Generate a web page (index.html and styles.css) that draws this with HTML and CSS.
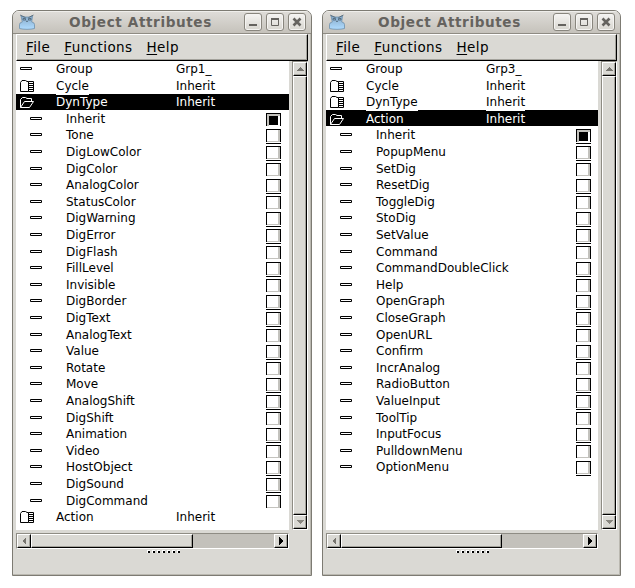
FILE: index.html
```
<!DOCTYPE html>
<html lang="en">
<head>
<meta charset="utf-8">
<title>Object Attributes</title>
<link rel="stylesheet" href="styles.css">
</head>
<body>
<svg class="defs" width="0" height="0">
  <defs>
    <linearGradient id="coat" x1="0" y1="0" x2="0" y2="1"><stop offset="0" stop-color="#86a9c8"/><stop offset="1" stop-color="#b0dcff"/></linearGradient>
    <symbol id="leaf" viewBox="0 0 16 14"><path d="M.5 5.500h11v2H.5z" fill="#fff" stroke="#000"/></symbol>
    <symbol id="closed" viewBox="0 0 16 14"><path d="M8.500 12.500h-8v-9l1.500-2h3.500l1.500 1h1.500" fill="none" stroke="#000"/><path d="M8.500 2.500h5v10h-5zM9 4.500h4M9 6.500h4M9 8.500h4M9 10.500h4" fill="none" stroke="#000"/></symbol>
    <symbol id="open" viewBox="0 0 16 14"><path d="M.5 12.500v-8l2-2h3l1.500 1h4.500v3M.5 12.500h9l4-6h-9l-4 6" fill="none" stroke="#fff"/></symbol>
    <symbol id="owl" viewBox="0 0 16 16"><path d="M.5 14.500v-4q0-2 2.800-2.500L2 1.800l3 1.200h5.500l3-1.200L12.700 8q2.800.5 2.800 2.500v4q-3 .8-7.500.8t-7.500-.8z" fill="url(#coat)" stroke="#6d90ad" stroke-width=".8"/><path d="M1 1l5.500 2.500M14.500 1L9.500 3.500M4 4.500h2.500v1.500H4zM9.500 4.500H12v1.500H9.500zM7 6.500l1 1.500 1-1.500" fill="none" stroke="#4d6272" stroke-width=".8"/></symbol>
  </defs>
</svg>
<main class="desktop" id="desktop"></main>
<script src="script.js"></script>
</body>
</html>
```
FILE: styles.css
```
body { margin: 0; background: #fff; font-family: "DejaVu Sans", sans-serif; color: #000; }
.defs { position: absolute; }
.desktop { display: flex; gap: 10px; padding: 10px 0 0 12px; }
.window { box-sizing: border-box; width: 300px; height: 566px; border: 1px solid #7d7b73; border-radius: 7px 7px 0 0; background: #dad9d4; box-shadow: inset -1px -1px #bab8b0; overflow: hidden; }
.window.narrow { width: 299px; }
.titlebar { display: flex; box-sizing: border-box; height: 23px; border-bottom: 1px solid #8e8b83; background: linear-gradient(#dfddd9, #c5c2bb); box-shadow: inset 0 1px #efeeeb; padding: 2px 5px 0 6px; }
.titlebar .owl { width: 16px; height: 16px; margin-top: 1px; }
.caption { flex: 1; padding-left: 2px; font-size: 13.6px; letter-spacing: .6px; line-height: 18px; font-weight: bold; color: #65635f; text-align: center; white-space: nowrap; }
.narrow .caption { padding-left: 1px; }
.buttons { display: flex; gap: 4px; }
.button { box-sizing: border-box; width: 18px; height: 18px; border: 1px solid #89867e; border-radius: 3px; background: linear-gradient(#f5f4f2, #d8d6d0); box-shadow: inset 0 0 0 1px #f5f4f2; }
.button svg { display: block; width: 16px; height: 16px; }
.menubar { display: flex; box-sizing: border-box; height: 27px; width: 292px; margin-left: 3px; padding: 2px 0 0 9px; gap: 14px; border: 1px solid; border-color: #fff #000 #000 #fff; box-shadow: inset -1px -1px #a3a29b; font-size: 13.5px; letter-spacing: .42px; line-height: 20px; }
.narrow .menubar { width: 291px; }
.menubar u { text-underline-offset: 2px; }
.body { display: flex; margin-left: 3px; height: 469px; }
.list { width: 273px; height: 469px; background: #fff; }
.narrow .list { width: 272px; }
.row { display: flex; position: relative; box-sizing: border-box; height: 17px; padding-left: 4px; font-size: 12px; line-height: 16px; }
.row:nth-child(5n+2), .row:nth-child(5n+4) { height: 16px; }
.row svg { width: 16px; height: 14px; margin-top: 1px; }
.name { width: 120px; margin-left: 20px; }
.row.child { padding-left: 14px; }
.row.selected { height: 16px; color: #fff; background: #000; }
.row.selected:nth-child(4) { margin-top: -1px; padding-top: 1px; margin-bottom: 1px; }
.row.selected + .row { margin-top: 1px; }
.row.selected:nth-child(4) + .row { margin-top: 0; }
.row:has(+ .selected) { z-index: 1; }
.row:has(+ .selected) .text { display: inline-block; height: 17px; background: #fff; }
.row:nth-child(2) .value .text { height: 16px !important; }
.check { position: relative; box-sizing: border-box; width: 15px; height: 13px; margin: 2px 0 0 80px; border: 1px solid #000; border-bottom: 0; background: #fff; box-shadow: inset -2px -1px #c3c2bd; flex: none; }
.check::after { content: ""; position: absolute; left: -1px; top: 13px; width: 15px; height: 1px; background: #000; }
.row:nth-child(5n+2) .check::after, .row:nth-child(5n+4) .check::after { display: none; }
.check.on { background: linear-gradient(#000, #000) 2px 2px / 9px 9px no-repeat #fff; box-shadow: inset 2px 2px #c3c2bd; }
.vscroll { box-sizing: border-box; width: 16px; height: 469px; margin-left: 3px; border: 1px solid; border-color: #8e8c84 #fff #fff #8e8c84; }
.hscroll { display: flex; box-sizing: border-box; width: 273px; height: 16px; margin: 3px 0 0 3px; border: 1px solid; border-color: #8e8c84 #fff #fff #8e8c84; background: #c3c1bb; }
.narrow .hscroll { width: 272px; }
.raised { box-sizing: border-box; border: 1px solid; border-color: #fff #000 #000 #fff; background: #dad9d4; box-shadow: inset -1px -1px #a3a29b; }
.vscroll .arrow { height: 14px; }
.vscroll .thumb { height: 439px; }
.arrow svg { display: block; width: 12px; height: 12px; }
.hscroll .arrow { width: 14px; height: 14px; }
.hscroll .thumb { width: 162px; height: 14px; }
.narrow .hscroll .thumb { width: 161px; }
.hscroll .arrow:last-child { margin-left: auto; }
.grip { display: flex; gap: 2px; margin: 1px 0 0 134px; }
.narrow .grip { margin-left: 133px; }
.grip i { box-sizing: border-box; width: 3px; height: 3px; border: solid #fff; border-width: 1px 0 0 1px; background: #000; }
```
FILE: script.js
```
const icon = (id) => `<svg><use href="#${id}"/></svg>`;
const row = ([kind, name, value]) =>
  `<div class="row${kind === 'open' ? ' selected' : ''}">${icon(kind)}<span class="name"><span class="text">${name}</span></span><span class="value"><span class="text">${value}</span></span></div>`;
const option = (name, i) =>
  `<div class="row child">${icon('leaf')}<span class="name">${name}</span><span class="check${i ? '' : ' on'}"></span></div>`;
const arrow = (d, fill) => `<div class="raised arrow"><svg shape-rendering="crispEdges"><path d="${d}" fill="${fill}"/></svg></div>`;

function windowHtml(w) {
  return `<section class="window ${w.size}">
    <header class="titlebar"><svg class="owl"><use href="#owl"/></svg><span class="caption">Object Attributes</span>
      <span class="buttons">
        <span class="button"><svg><path d="M4 11h8" stroke="#65635f" stroke-width="2"/></svg></span>
        <span class="button"><svg><path d="M4.500 5v6.500h7V5M4 5h8" fill="none" stroke="#65635f"/><path d="M4 5h8" stroke="#65635f" stroke-width="2"/></svg></span>
        <span class="button"><svg><path d="M4.500 4.500l7 7M11.500 4.500l-7 7" stroke="#65635f" stroke-width="2.600"/></svg></span>
      </span></header>
    <nav class="menubar"><span><u>F</u>ile</span><span><u>F</u>unctions</span><span><u>H</u>elp</span></nav>
    <div class="body"><div class="list">${w.before.map(row).join('')}${w.options.map(option).join('')}${w.after.map(row).join('')}</div>
      <div class="vscroll">${arrow('M6 4l4 4H3z', '#77756f')}<div class="raised thumb"></div>${arrow('M2 4h8l-4 4z', '#88867f')}</div></div>
    <div class="hscroll">${arrow('M8 2v8l-4-4z', '#77756f')}<div class="raised thumb"></div>${arrow('M4 2v8l4-4z', '#000')}</div>
    <div class="grip">${'<i></i>'.repeat(7)}</div>
  </section>`;
}

const windows = [
  { size: '', before: [['leaf', 'Group', 'Grp1_'], ['closed', 'Cycle', 'Inherit'], ['open', 'DynType', 'Inherit']],
    options: 'Inherit Tone DigLowColor DigColor AnalogColor StatusColor DigWarning DigError DigFlash FillLevel Invisible DigBorder DigText AnalogText Value Rotate Move AnalogShift DigShift Animation Video HostObject DigSound DigCommand'.split(' '),
    after: [['closed', 'Action', 'Inherit']] },
  { size: 'narrow', before: [['leaf', 'Group', 'Grp3_'], ['closed', 'Cycle', 'Inherit'], ['closed', 'DynType', 'Inherit'], ['open', 'Action', 'Inherit']],
    options: 'Inherit PopupMenu SetDig ResetDig ToggleDig StoDig SetValue Command CommandDoubleClick Help OpenGraph CloseGraph OpenURL Confirm IncrAnalog RadioButton ValueInput ToolTip InputFocus PulldownMenu OptionMenu'.split(' '),
    after: [] },
];
document.getElementById('desktop').innerHTML = windows.map(windowHtml).join('');
```
